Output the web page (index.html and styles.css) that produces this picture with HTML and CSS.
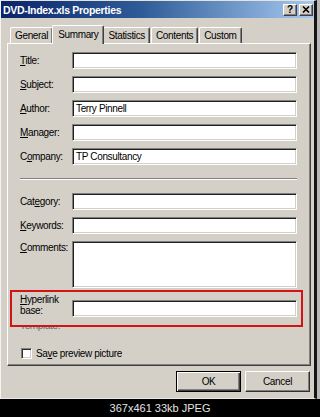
FILE: index.html
```html
<!DOCTYPE html>
<html>
<head>
<meta charset="utf-8">
<title>DVD-Index.xls Properties</title>
<link rel="stylesheet" href="styles.css">
</head>
<body>
<div class="screen">
  <div class="window">
    <div class="titlebar">
      <span class="title">DVD-Index.xls Properties</span>
      <div class="tbtns">
        <span class="tbtn help">?</span>
        <span class="tbtn close"><svg width="8" height="7" viewBox="0 0 8 7"><path d="M1 0.5 L7 6.5 M7 0.5 L1 6.5" stroke="#000" stroke-width="1.6" fill="none"/></svg></span>
      </div>
    </div>
    <div class="body">
      <div class="tabs">
        <span class="tab">General</span>
        <span class="tab active">Summary</span>
        <span class="tab">Statistics</span>
        <span class="tab">Contents</span>
        <span class="tab">Custom</span>
      </div>
      <div class="panel">
        <div class="row"><span class="label"><u>T</u>itle:</span><span class="field"></span></div>
        <div class="row"><span class="label"><u>S</u>ubject:</span><span class="field"></span></div>
        <div class="row"><span class="label"><u>A</u>uthor:</span><span class="field">Terry Pinnell</span></div>
        <div class="row"><span class="label"><u>M</u>anager:</span><span class="field"></span></div>
        <div class="row"><span class="label">C<u>o</u>mpany:</span><span class="field">TP Consultancy</span></div>
        <div class="sep"></div>
        <div class="row"><span class="label">Cat<u>e</u>gory:</span><span class="field"></span></div>
        <div class="row"><span class="label"><u>K</u>eywords:</span><span class="field"></span></div>
        <div class="row tall"><span class="label"><u>C</u>omments:</span><span class="field big"></span></div>
        <div class="highlight">
          <div class="row top"><span class="label two"><u>H</u>yperlink<br>base:</span><span class="field"></span></div>
        </div>
        <div class="template">Template:</div>
        <div class="check-row"><span class="checkbox"></span><span class="check-label">Sa<u>v</u>e preview picture</span></div>
      </div>
      <div class="buttons">
        <span class="btn default">OK</span>
        <span class="btn">Cancel</span>
      </div>
    </div>
  </div>
  <div class="caption">367x461 33kb JPEG</div>
</div>
</body>
</html>
```
FILE: styles.css
```css
html, body {
  margin: 0;
  padding: 0;
  background: #000;
}
.screen {
  width: 320px;
  height: 417px;
  background: #b8b8b8;
  display: flex;
  flex-direction: column;
  font-family: "Liberation Sans", Arial, sans-serif;
  font-size: 10px;
  letter-spacing: -0.35px;
  color: #000;
}
.window {
  width: 317px;
  height: 399px;
  box-sizing: border-box;
  background: #d4d0c8;
  border-top: 1px solid #e6e3dc;
  border-left: 1px solid #f4f4f4;
  border-right: 3px solid #141414;
  border-bottom: 1px solid #e8e8e8;
  display: flex;
  flex-direction: column;
}
.titlebar {
  height: 17px;
  background: linear-gradient(to right, #0a246a, #2f5c98 45%, #a6caf0);
  display: flex;
  align-items: center;
  justify-content: space-between;
  padding: 0 1px 0 2px;
}
.title {
  color: #fff;
  font-weight: bold;
  font-size: 10.5px;
  letter-spacing: -0.3px;
}
.tbtns {
  display: flex;
  gap: 2px;
}
.tbtn {
  width: 14px;
  height: 12px;
  box-sizing: border-box;
  background: #d4d0c8;
  border-top: 1px solid #fff;
  border-left: 1px solid #fff;
  border-right: 1px solid #404040;
  border-bottom: 1px solid #404040;
  box-shadow: inset -1px -1px #808080;
  display: flex;
  align-items: center;
  justify-content: center;
  font-weight: bold;
  font-size: 10px;
  line-height: 10px;
}
.body {
  flex: 1;
  display: flex;
  flex-direction: column;
  padding: 7px 3px 0 6px;
}
.tabs {
  height: 18px;
  display: flex;
  align-items: flex-end;
  padding-left: 3px;
  position: relative;
  z-index: 1;
}
.tab {
  height: 16px;
  box-sizing: border-box;
  padding: 0 4px;
  display: flex;
  align-items: center;
  background: #d4d0c8;
  border-top: 1px solid #fff;
  border-left: 1px solid #fff;
  border-right: 1px solid #404040;
  border-radius: 2px 2px 0 0;
  box-shadow: inset -1px 0 #808080;
  margin-right: 1px;
}
.tab.active {
  height: 19px;
  margin: 0 -1px -1px -2px;
  padding: 0 5px 2px 5px;
  position: relative;
  z-index: 2;
}
.panel {
  width: 304px;
  box-sizing: border-box;
  border-top: 1px solid #fff;
  border-left: 1px solid #fff;
  border-right: 1px solid #404040;
  border-bottom: 1px solid #404040;
  box-shadow: inset -1px -1px #808080;
  padding: 8px 13px 6px 12px;
  display: flex;
  flex-direction: column;
}
.row {
  display: flex;
  align-items: center;
  margin-bottom: 7px;
}
.row.tall {
  align-items: flex-start;
  margin-bottom: 0;
}
.row.top {
  align-items: flex-start;
  margin-bottom: 0;
}
.label {
  width: 52px;
  flex: none;
  line-height: 11px;
  white-space: nowrap;
}
.row.tall .label {
  margin-top: 1px;
}
.label.two {
  margin-top: -6px;
}
.field {
  flex: 1;
  height: 17px;
  box-sizing: border-box;
  background: #fff;
  border-top: 1px solid #808080;
  border-left: 1px solid #808080;
  border-right: 1px solid #fff;
  border-bottom: 1px solid #fff;
  box-shadow: inset 1px 1px #202020, inset -1px -1px #d4d0c8;
  padding: 0 3px;
  display: flex;
  align-items: center;
}
.field.big {
  height: 47px;
}
.sep {
  border-top: 1px solid #808080;
  border-bottom: 1px solid #fff;
  margin: 6px 0 13px 0;
}
.highlight {
  margin: 2px -6px 0 -10px;
  border: 2px solid #d21414;
  padding: 8px 4px 8px 8px;
  background: #d4d0c8;
  position: relative;
  z-index: 1;
}
.template {
  margin-top: -7px;
  line-height: 11px;
  color: #6a6a6a;
}
.check-row {
  display: flex;
  align-items: center;
  margin-top: 17px;
}
.checkbox {
  width: 11px;
  height: 11px;
  box-sizing: border-box;
  margin-left: 1px;
  background: #fff;
  border-top: 1px solid #808080;
  border-left: 1px solid #808080;
  border-right: 1px solid #fff;
  border-bottom: 1px solid #fff;
  box-shadow: inset 1px 1px #303030, inset -1px -1px #d4d0c8;
}
.check-label {
  margin-left: 4px;
  line-height: 11px;
}
.buttons {
  display: flex;
  justify-content: flex-end;
  gap: 4px;
  margin-top: 5px;
  padding-right: 1px;
}
.btn {
  width: 65px;
  height: 21px;
  box-sizing: border-box;
  background: #d4d0c8;
  border-top: 1px solid #fff;
  border-left: 1px solid #fff;
  border-right: 1px solid #303030;
  border-bottom: 1px solid #303030;
  box-shadow: inset -1px -1px #808080;
  display: flex;
  align-items: center;
  justify-content: center;
}
.btn.default {
  border: 1px solid #000;
  box-shadow: inset 1px 1px #fff, inset -1px -1px #404040, inset -2px -2px #808080;
}
.caption {
  flex: 1;
  width: 320px;
  background: #000;
  color: #e4e4e4;
  font-size: 11px;
  letter-spacing: 0;
  display: flex;
  align-items: center;
  justify-content: center;
}
```
